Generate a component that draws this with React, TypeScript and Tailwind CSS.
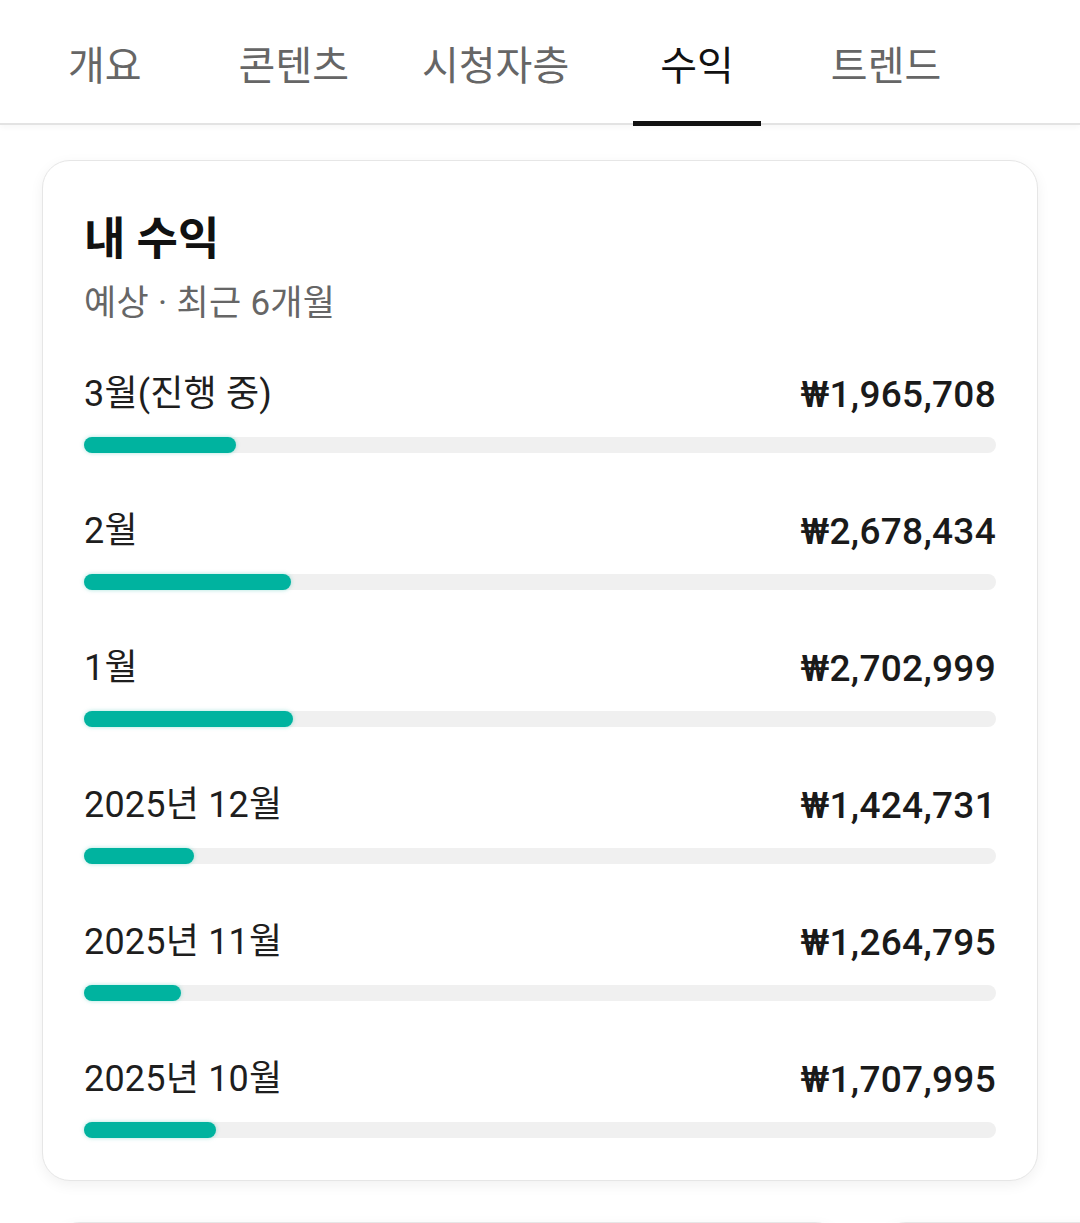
import React from "react";

const FONT = { fontFamily: 'Roboto, "Noto Sans CJK KR", "Noto Sans", sans-serif' };

const tabs = [
  { label: "개요", ml: "ml-[41px]" },
  { label: "콘텐츠", ml: "ml-[43px]" },
  { label: "시청자층", ml: "ml-[19px]" },
  { label: "수익", ml: "ml-[37px]", active: true },
  { label: "트렌드", ml: "ml-[43px]" },
];

const rows = [
  { label: "3월(진행 중)", amount: "₩1,965,708", w: 152 },
  { label: "2월", amount: "₩2,678,434", w: 207 },
  { label: "1월", amount: "₩2,702,999", w: 209 },
  { label: "2025년 12월", amount: "₩1,424,731", w: 110 },
  { label: "2025년 11월", amount: "₩1,264,795", w: 97 },
  { label: "2025년 10월", amount: "₩1,707,995", w: 132 },
];

export default function App() {
  return (
    <div className="w-[1080px] h-[1223px] overflow-hidden bg-white" style={FONT}>
      <div className="relative h-[125px] border-b-2 border-[#e3e3e3] shadow-[0_2px_6px_rgba(0,0,0,0.04)]">
        <div className="flex h-full items-stretch">
          {tabs.map((t) => (
            <div
              key={t.label}
              className={`${t.ml} relative flex items-center px-[27px] pt-[10px] text-[40px] leading-none ${
                t.active ? "text-[#111111]" : "text-[#666666]"
              }`}
            >
              <span>{t.label}</span>
              {t.active && (
                <div className="absolute left-0 right-0 -bottom-[3px] h-[5px] bg-[#111111]" />
              )}
            </div>
          ))}
        </div>
      </div>

      <div className="px-[42px] pt-[35px]">
        <div className="rounded-[28px] border border-[#e6e6e6] bg-white shadow-[0_4px_14px_rgba(0,0,0,0.06)] px-[41px] pt-[56px] pb-[42px]">
          <div className="text-[45px] font-bold leading-none text-[#111111]">내 수익</div>
          <div className="mt-[24px] text-[35px] tracking-[0.3px] leading-none text-[#666666]">예상 · 최근 6개월</div>

          <div className="mt-[53px] flex flex-col gap-[58px]">
            {rows.map((r) => (
              <div key={r.label}>
                <div className="flex items-center justify-between h-[40px]">
                  <span className="text-[36px] tracking-[0.2px] leading-none text-[#1e1e1e]">{r.label}</span>
                  <span className="text-[37px] font-medium tracking-[0.3px] leading-none text-[#1a1a1a]">{r.amount}</span>
                </div>
                <div className="mt-[23px] h-[16px] rounded-full bg-[#f0f0f0]">
                  <div
                    className="h-full rounded-full bg-[#00b39f] shadow-[0_0_4px_rgba(0,179,159,0.35)]"
                    style={{ width: `${r.w}px` }}
                  />
                </div>
              </div>
            ))}
          </div>
        </div>

        <div className="mt-[41px] flex gap-[35px]">
          <div className="flex-none ml-[10px] w-[791px] h-[120px] rounded-[28px] border border-[#e6e6e6] bg-white shadow-[0_4px_14px_rgba(0,0,0,0.06)]" />
          <div className="flex-none w-[300px] h-[120px] rounded-[28px] border border-[#e6e6e6] bg-white shadow-[0_4px_14px_rgba(0,0,0,0.06)]" />
        </div>
      </div>
    </div>
  );
}
